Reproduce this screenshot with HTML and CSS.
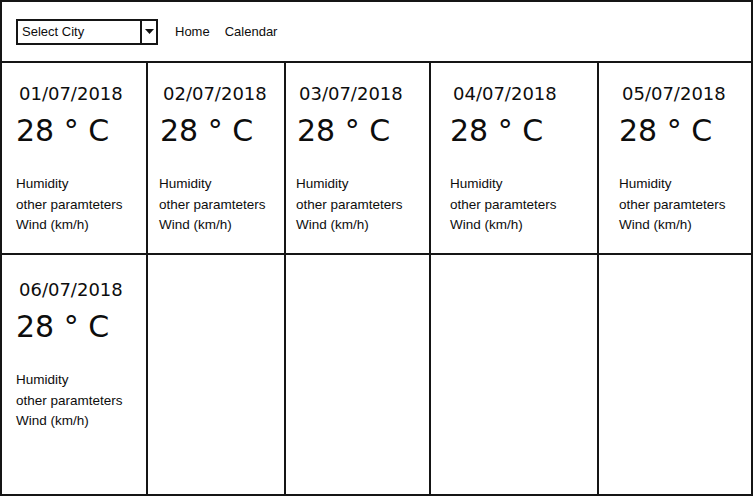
FILE: index.html
```html
<!DOCTYPE html>
<html>
<head>
<meta charset="utf-8">
<link rel="stylesheet" href="styles.css">
</head>
<body>
<header class="header">
  <div class="select">
    <span class="select-label">Select City</span>
    <span class="select-btn"><svg width="9" height="5" viewBox="0 0 9 5"><polygon points="0,0 9,0 4.5,5" fill="#111"/></svg></span>
  </div>
  <nav class="nav">
    <a class="nav-link">Home</a>
    <a class="nav-link">Calendar</a>
  </nav>
</header>
<main class="grid">
  <section class="cell c1"><div class="date">01/07/2018</div><div class="temp">28 ° C</div><ul class="params"><li>Humidity</li><li>other paramteters</li><li>Wind (km/h)</li></ul></section>
  <section class="cell c2"><div class="date">02/07/2018</div><div class="temp">28 ° C</div><ul class="params"><li>Humidity</li><li>other paramteters</li><li>Wind (km/h)</li></ul></section>
  <section class="cell c3"><div class="date">03/07/2018</div><div class="temp">28 ° C</div><ul class="params"><li>Humidity</li><li>other paramteters</li><li>Wind (km/h)</li></ul></section>
  <section class="cell c4"><div class="date">04/07/2018</div><div class="temp">28 ° C</div><ul class="params"><li>Humidity</li><li>other paramteters</li><li>Wind (km/h)</li></ul></section>
  <section class="cell c5"><div class="date">05/07/2018</div><div class="temp">28 ° C</div><ul class="params"><li>Humidity</li><li>other paramteters</li><li>Wind (km/h)</li></ul></section>
  <section class="cell c1 lower"><div class="date">06/07/2018</div><div class="temp">28 ° C</div><ul class="params"><li>Humidity</li><li>other paramteters</li><li>Wind (km/h)</li></ul></section>
  <section class="cell c2 lower"></section>
  <section class="cell c3 lower"></section>
  <section class="cell c4 lower"></section>
  <section class="cell c5 lower"></section>
</main>
</body>
</html>
```
FILE: styles.css
```css
* { box-sizing: border-box; }
html, body { margin: 0; padding: 0; background: #fff; }
body {
  width: 753px;
  height: 496px;
  overflow: hidden;
  color: #0d0d0d;
  font-family: "Liberation Sans", Arial, sans-serif;
}
.header {
  height: 63px;
  border: 2px solid #151515;
  display: flex;
  align-items: center;
  padding-left: 14px;
}
.select {
  width: 142px;
  height: 26px;
  border: 2px solid #151515;
  display: flex;
  align-items: stretch;
}
.select-label {
  flex: 1;
  font-size: 13px;
  line-height: 22px;
  padding-left: 4px;
}
.select-btn {
  width: 16px;
  border-left: 2px solid #151515;
  display: flex;
  align-items: center;
  justify-content: center;
  padding-left: 1px;
}
.nav {
  display: flex;
  gap: 15px;
  margin-left: 17px;
}
.nav-link {
  font-size: 13px;
  color: #0d0d0d;
}
.grid {
  display: grid;
  grid-template-columns: 148px 138px 145px 168px 154px;
  grid-template-rows: 192px 241px;
}
.cell {
  border-right: 2px solid #151515;
  border-bottom: 2px solid #151515;
  padding-top: 20px;
  padding-left: var(--pl);
}
.c1 { border-left: 2px solid #151515; --pl: 14px; }
.c2 { --pl: 11px; }
.c3 { --pl: 10px; }
.c4 { --pl: 19px; }
.c5 { --pl: 20px; }
.lower { padding-top: 24px; }
.date {
  font-family: "DejaVu Sans", sans-serif;
  font-size: 18px;
  line-height: 22px;
  margin-left: 3px;
}
.c2 .date { margin-left: 4px; }
.temp {
  font-family: "DejaVu Sans", sans-serif;
  font-size: 30px;
  line-height: 36px;
  margin-top: 8px;
}
.c2 .temp, .c3 .temp { margin-left: 1px; }
.params {
  list-style: none;
  margin: 25px 0 0;
  padding: 0;
  font-size: 13.5px;
  line-height: 20.5px;
}
```
